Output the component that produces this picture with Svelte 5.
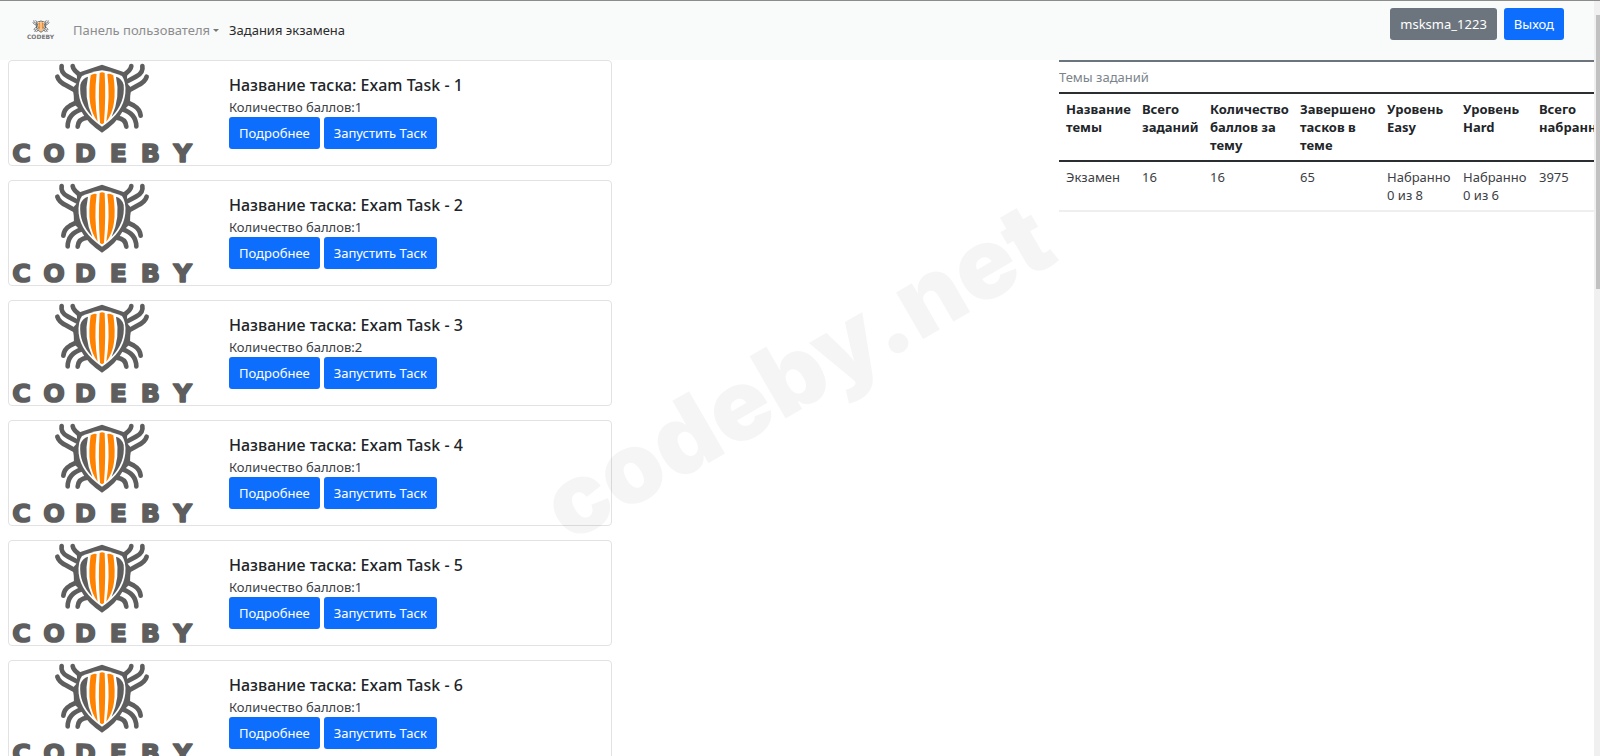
<script>
  const tasks = [
    { id: 1, points: 1 },
    { id: 2, points: 1 },
    { id: 3, points: 2 },
    { id: 4, points: 1 },
    { id: 5, points: 1 },
    { id: 6, points: 1 }
  ];
  const columns = [
    { title: 'Название темы', width: 76 },
    { title: 'Всего заданий', width: 68 },
    { title: 'Количество баллов за тему', width: 90 },
    { title: 'Завершено тасков в теме', width: 87 },
    { title: 'Уровень Easy', width: 76 },
    { title: 'Уровень Hard', width: 76 },
    { title: 'Всего набранно', width: 90 }
  ];
  const row = ['Экзамен', '16', '16', '65', 'Набранно 0 из 8', 'Набранно 0 из 6', '3975'];
  const letters = [
    { c: 'C', x: 65 },
    { c: 'O', x: 162 },
    { c: 'D', x: 256 },
    { c: 'E', x: 355 },
    { c: 'B', x: 451 },
    { c: 'Y', x: 548 }
  ];
</script>

{#snippet half()}
  <g fill="none" stroke="#5e5e5e" stroke-width="14" stroke-linecap="round">
    <path d="M394 48 Q393 62 366 78" />
    <path d="M427 48 Q431 68 408 80 L378 96" />
    <path d="M440 80 Q436 96 412 107 L382 124" />
    <path d="M382 157 L402 167 Q420 177 422 197" />
    <path d="M366 178 Q408 190 409 229" />
    <path d="M350 203 Q377 206 379 230" />
  </g>
{/snippet}

{#snippet bug()}
  {@render half()}
  <g transform="matrix(-1 0 0 1 612 0)">{@render half()}</g>
  <path fill="#5e5e5e" d="M306 44 L382 70 L380 98 L394 114 Q389 140 390 162 L368 184 Q350 220 306 248 Q262 220 244 184 L222 162 Q223 140 218 114 L232 98 L230 70Z" />
  <path fill="#fff" d="M306 61 Q342 67 366 78 Q379 96 376 130 Q370 188 306 230 Q242 188 236 130 Q233 96 246 78 Q270 67 306 61Z" />
  <path fill="#5e5e5e" d="M264 80 Q247 84 241 104 Q236 158 277 200 Q250 142 264 80Z M348 80 Q365 84 371 104 Q376 158 335 200 Q362 142 348 80Z" />
  <path fill="#ff8200" d="M299 69 Q306 64 314 69 Q318 140 312 218 Q306 226 300 218 Q294 140 299 69Z M272 76 Q281 69 290 72 Q281 140 293 215 Q258 172 272 76Z M340 76 Q331 69 322 72 Q331 140 319 215 Q354 172 340 76Z" />
{/snippet}

<div class="page">
  <div class="view">
    <header>
      <a class="brand" href="#top" aria-label="Codeby">
        <svg viewBox="156 36 300 216" aria-hidden="true">{@render bug()}</svg>
        <span>CODEBY</span>
      </a>
      <nav>
        <button class="link" type="button">Панель пользователя<i></i></button>
        <a class="link active" href="#tasks">Задания экзамена</a>
      </nav>
      <div class="account">
        <button class="btn gray" type="button">msksma_1223</button>
        <button class="btn" type="button">Выход</button>
      </div>
    </header>

    <main>
      <section class="tasks" id="tasks">
        {#each tasks as task}
          <article>
            <svg class="logo" viewBox="27 33 558 312" aria-hidden="true">
              {@render bug()}
              {#each letters as l}
                <text x={l.x} y="336">{l.c}</text>
              {/each}
            </svg>
            <div class="body">
              <h5>Название таска: Exam Task - {task.id}</h5>
              <p>Количество баллов:{task.points}</p>
              <div class="actions">
                <button class="btn" type="button">Подробнее</button>
                <button class="btn" type="button">Запустить Таск</button>
              </div>
            </div>
          </article>
        {/each}
      </section>

      <section class="topics">
        <table>
          <caption>Темы заданий</caption>
          <colgroup>
            {#each columns as col}<col style="width: {col.width}px" />{/each}
          </colgroup>
          <thead>
            <tr>{#each columns as col}<th scope="col">{col.title}</th>{/each}</tr>
          </thead>
          <tbody>
            <tr>{#each row as cell}<td>{cell}</td>{/each}</tr>
          </tbody>
        </table>
      </section>
    </main>
    <div class="watermark" aria-hidden="true">codeby.net</div>
  </div>
  <div class="scrollbar" aria-hidden="true"><div class="thumb"></div></div>
</div>

<style>
  :global(body) {
    background: #fff;
    color: #212529;
    font: 13px/18px "Noto Sans", "Open Sans", sans-serif;
  }
  .page {
    display: flex;
    height: 100vh;
    box-sizing: border-box;
    border-top: 1px solid #8c8c8c;
    overflow: hidden;
  }
  .view {
    flex: 1;
    min-width: 0;
    overflow: hidden;
    position: relative;
  }
  header {
    display: flex;
    height: 59px;
    box-sizing: border-box;
    align-items: center;
    background: #f9fafa;
    padding: 0 30px 1px 27px;
  }
  .brand {
    display: flex;
    flex-direction: column;
    align-items: center;
    width: 27px;
    color: #777;
    text-decoration: none;
  }
  .brand svg {
    width: 18px;
    height: 13px;
  }
  .brand span {
    font: bold 6px/7px "DejaVu Sans", sans-serif;
  }
  nav {
    display: flex;
    gap: 10px;
    margin-left: 19px;
  }
  .link {
    display: flex;
    align-items: center;
    gap: 3px;
    padding: 0;
    border: 0;
    background: none;
    font: inherit;
    color: #8c8d8e;
    text-decoration: none;
  }
  .link.active {
    color: #2b2c2d;
  }
  .link i {
    border: 3px solid transparent;
    border-top-color: #777;
    border-bottom: 0;
  }
  .account {
    display: flex;
    gap: 7px;
    margin-left: auto;
    align-self: flex-start;
    padding-top: 7px;
  }
  .btn {
    height: 32px;
    padding: 0 10px;
    border: 0;
    border-radius: 3px;
    background: #0d6efd;
    color: #fff;
    font: inherit;
    white-space: nowrap;
  }
  .btn.gray {
    background: #6c757d;
  }
  main {
    display: grid;
    grid-template-columns: 604fr 447fr 535fr;
    padding-left: 8px;
  }
  .tasks {
    display: flex;
    flex-direction: column;
    gap: 14px;
  }
  article {
    display: flex;
    border: 1px solid #e2e2e2;
    border-radius: 4px;
    background: #fff;
  }
  .logo {
    width: 186px;
    height: 104px;
    flex: none;
    overflow: visible;
  }
  .logo text {
    font: bold 76px "DejaVu Sans", sans-serif;
    fill: #5e5e5e;
    stroke: #5e5e5e;
    stroke-width: 5px;
    stroke-linejoin: round;
    text-anchor: middle;
  }
  .body {
    padding: 13px 0 0 34px;
  }
  h5 {
    margin: 0 0 2px;
    font-size: 16px;
    line-height: 22px;
    font-weight: 500;
  }
  p {
    margin: 0 0 1px;
    color: #3c4044;
  }
  .actions {
    display: flex;
    gap: 4px;
  }
  .topics {
    grid-column: 3;
    overflow: hidden;
    border-top: 2px solid #6c757d;
  }
  table {
    table-layout: fixed;
    width: 563px;
    border-collapse: collapse;
  }
  caption {
    caption-side: top;
    padding: 6px 0;
    text-align: left;
    color: #7b848b;
  }
  th,
  td {
    padding: 6px 0 6px 7px;
    text-align: left;
    vertical-align: top;
  }
  th {
    border-top: 2px solid #2b2e31;
    border-bottom: 2px solid #2b2e31;
    font-weight: 700;
  }
  td {
    border-bottom: 2px solid #efefef;
    color: #3c4044;
  }
  .watermark {
    position: absolute;
    left: 50%;
    top: 49%;
    transform: translate(-50%, -50%) rotate(-30deg);
    font: 900 99px/1 Inter, sans-serif;
    color: rgba(0, 0, 0, 0.04);
    pointer-events: none;
  }
  .scrollbar {
    width: 6px;
    padding-top: 14px;
    box-sizing: border-box;
    background: #f0f0f0;
  }
  .thumb {
    height: 37%;
    margin-left: 2px;
    background: #c1c1c1;
  }
</style>
